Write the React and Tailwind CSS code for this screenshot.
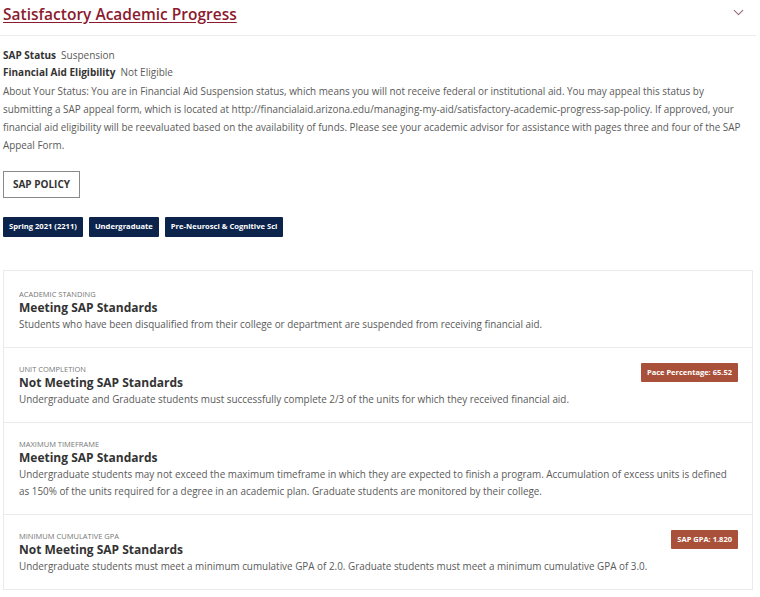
import { ChevronDown } from "lucide-react";

const rows = [
  {
    label: "Academic Standing",
    title: "Meeting SAP Standards",
    desc: "Students who have been disqualified from their college or department are suspended from receiving financial aid.",
  },
  {
    label: "Unit Completion",
    title: "Not Meeting SAP Standards",
    desc: "Undergraduate and Graduate students must successfully complete 2/3 of the units for which they received financial aid.",
    badge: "Pace Percentage: 65.52",
  },
  {
    label: "Maximum Timeframe",
    title: "Meeting SAP Standards",
    desc: "Undergraduate students may not exceed the maximum timeframe in which they are expected to finish a program. Accumulation of excess units is defined as 150% of the units required for a degree in an academic plan. Graduate students are monitored by their college.",
  },
  {
    label: "Minimum Cumulative GPA",
    title: "Not Meeting SAP Standards",
    desc: "Undergraduate students must meet a minimum cumulative GPA of 2.0. Graduate students must meet a minimum cumulative GPA of 3.0.",
    badge: "SAP GPA: 1.820",
  },
];

const tags = ["Spring 2021 (2211)", "Undergraduate", "Pre-Neurosci & Cognitive Sci"];

export default function App() {
  return (
    <main className="w-[760px] h-[597px] bg-white overflow-hidden font-['Open_Sans',sans-serif] text-[#5a5a5a]">
      {/* Header */}
      <div className="flex items-start justify-between pl-[3px] pr-[9px] pt-[3px] h-[36px] border-b border-[#ececec] mr-[4px]">
        <h2 className="text-[15.5px] leading-[22px] font-semibold text-[#8b1a2e] underline underline-offset-2">
          Satisfactory Academic Progress
        </h2>
        <ChevronDown size={17} strokeWidth={1.5} className="text-[#9a6a78] mt-[1px]" />
      </div>

      {/* Status */}
      <div className="pl-[3px] pr-[14px] pt-[11px]">
        <div className="text-[10px] leading-[17px]">
          <span className="font-bold text-[#333]">SAP Status</span>
          <span className="ml-[5px]">Suspension</span>
        </div>
        <div className="text-[10px] leading-[17px]">
          <span className="font-bold text-[#333]">Financial Aid Eligibility</span>
          <span className="ml-[5px]">Not Eligible</span>
        </div>
        <p className="text-[9.9px] leading-[18px] mt-[1px]">
          About Your Status: You are in Financial Aid Suspension status, which means you will not receive federal or
          institutional aid. You may appeal this status by submitting a SAP appeal form, which is located at
          http://financialaid.arizona.edu/managing-my-aid/satisfactory-academic-progress-sap-policy. If approved, your
          financial aid eligibility will be reevaluated based on the availability of funds. Please see your academic
          advisor for assistance with pages three and four of the SAP Appeal Form.
        </p>

        <button className="mt-[17px] h-[27px] w-[77px] border border-[#8a8a8a] text-[10px] font-bold text-[#333]">
          SAP POLICY
        </button>

        <div className="flex gap-[6px] mt-[19px]">
          {tags.map((t) => (
            <span
              key={t}
              className="h-[20px] px-[6px] flex items-center bg-[#0c234b] text-white text-[7.6px] font-bold rounded-[1px]"
            >
              {t}
            </span>
          ))}
        </div>
      </div>

      {/* SAP rows */}
      <div className="ml-[3px] mr-[7px] mt-[33px] border border-[#ebebeb]">
        {rows.map((r, i) => (
          <div
            key={r.label}
            className={`relative px-[15px] pt-[15px] pb-[14px] ${i > 0 ? "border-t border-[#ebebeb]" : "pt-[17px]"}`}
          >
            <div className="text-[7.5px] leading-[12px] uppercase text-[#777]">{r.label}</div>
            <div className="text-[12px] leading-[16px] font-bold text-[#333]">{r.title}</div>
            <p className="text-[9.9px] leading-[17px]">{r.desc}</p>
            {r.badge && (
              <span className="absolute top-[15px] right-[14px] h-[19px] px-[6px] flex items-center bg-[#a9503a] text-white text-[7.5px] font-bold rounded-[1px]">
                {r.badge}
              </span>
            )}
          </div>
        ))}
      </div>
    </main>
  );
}
